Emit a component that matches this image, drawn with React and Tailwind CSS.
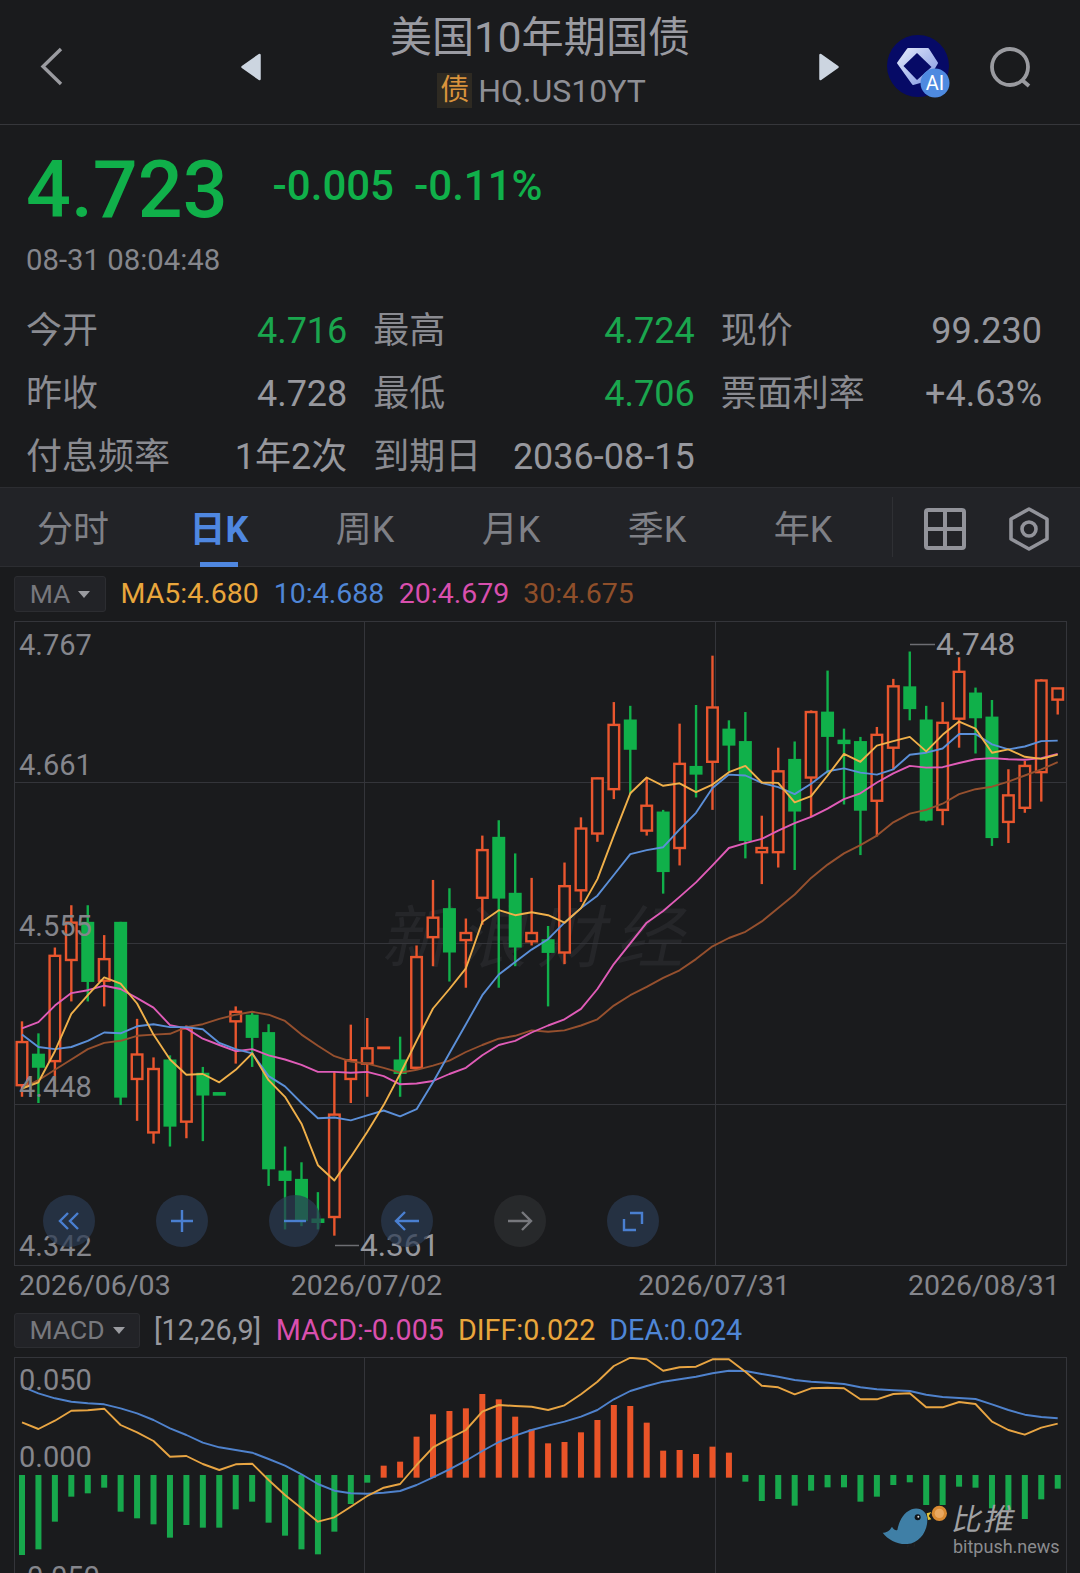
import React from 'react'

// measured off the reference: [up?, high, bodyTop, bodyBottom, low]
const candles = [
  [1, 968, 1018, 1122, 1150], [0, 997, 1046, 1080, 1165], [1, 790, 810, 1064, 1130], [1, 688, 730, 820, 920],
  [0, 688, 728, 873, 920], [1, 760, 818, 870, 932], [0, 728, 728, 1152, 1170], [1, 962, 1048, 1107, 1208],
  [1, 1055, 1083, 1236, 1263], [0, 1050, 1060, 1222, 1270], [1, 978, 985, 1210, 1250], [0, 1078, 1092, 1147, 1257],
  [0, 1143, 1141, 1145, 1143], [1, 932, 945, 968, 1070], [0, 948, 952, 1008, 1078], [0, 975, 994, 1325, 1365],
  [0, 1270, 1328, 1353, 1470], [0, 1308, 1348, 1450, 1462], [0, 1380, 1446, 1452, 1470], [1, 1090, 1193, 1440, 1485],
  [1, 976, 1062, 1107, 1165], [1, 960, 1033, 1070, 1150], [1, 1032, 1031, 1033, 1032], [0, 1005, 1060, 1095, 1150],
  [1, 785, 813, 1080, 1085], [1, 627, 718, 765, 835], [0, 647, 695, 802, 872], [1, 720, 755, 772, 887],
  [1, 520, 555, 670, 735], [0, 483, 523, 672, 887], [0, 563, 658, 790, 835], [1, 622, 755, 775, 785],
  [0, 738, 770, 803, 932], [1, 585, 642, 802, 830], [1, 476, 503, 652, 680], [1, 380, 382, 515, 535],
  [1, 198, 253, 408, 432], [0, 207, 240, 313, 420], [1, 380, 448, 508, 520], [0, 458, 462, 608, 660],
  [1, 250, 347, 550, 592], [0, 205, 352, 373, 428], [1, 86, 211, 342, 458], [0, 242, 262, 303, 365],
  [0, 222, 292, 533, 575], [1, 472, 550, 560, 637], [1, 308, 365, 560, 597], [0, 293, 335, 462, 603],
  [1, 218, 222, 380, 475], [0, 122, 221, 282, 370], [0, 262, 291, 297, 445], [0, 282, 292, 460, 567],
  [1, 258, 277, 436, 522], [1, 142, 160, 308, 362], [0, 76, 160, 215, 242], [0, 207, 240, 484, 486],
  [1, 198, 248, 458, 495], [1, 90, 125, 238, 308], [0, 163, 175, 237, 322], [0, 193, 233, 526, 545],
  [1, 360, 423, 487, 538], [1, 340, 352, 453, 465], [1, 143, 146, 367, 438], [1, 165, 165, 192, 228],
]

const ma5 = [1130, 1115, 1040, 950, 905, 862, 877, 925, 1000, 1060, 1097, 1095, 1115, 1085, 1045, 1110, 1150, 1215, 1315, 1352, 1295, 1235, 1170, 1095, 1015, 937, 890, 840, 728, 700, 712, 705, 712, 730, 695, 625, 520, 418, 380, 400, 394, 415, 397, 367, 352, 392, 393, 440, 425, 375, 323, 342, 303, 292, 282, 317, 277, 245, 262, 320, 312, 330, 335, 325]
const ma10 = [1000, 1030, 1035, 1030, 1015, 995, 997, 980, 975, 982, 982, 987, 1020, 1035, 1045, 1100, 1125, 1165, 1202, 1200, 1207, 1195, 1183, 1197, 1180, 1115, 1045, 975, 905, 855, 825, 795, 770, 730, 695, 665, 615, 565, 555, 548, 505, 465, 405, 373, 375, 393, 403, 420, 395, 365, 358, 368, 373, 360, 325, 320, 310, 275, 275, 300, 312, 305, 292, 291]
const ma20 = [985, 970, 930, 900, 893, 882, 890, 912, 935, 977, 985, 1010, 1025, 1040, 1035, 1050, 1060, 1073, 1090, 1090, 1092, 1090, 1100, 1120, 1118, 1112, 1095, 1080, 1050, 1025, 1015, 995, 978, 963, 938, 890, 830, 780, 730, 702, 668, 633, 592, 550, 538, 528, 508, 490, 475, 455, 432, 418, 392, 370, 352, 356, 355, 345, 336, 333, 336, 337, 333, 323]
const ma30 = [1130, 1110, 1085, 1060, 1035, 1020, 1015, 1003, 1000, 998, 982, 975, 962, 952, 945, 952, 967, 1000, 1027, 1052, 1065, 1070, 1080, 1092, 1085, 1075, 1063, 1042, 1025, 1010, 1003, 990, 993, 990, 978, 963, 930, 905, 885, 863, 845, 818, 787, 767, 752, 727, 695, 662, 622, 590, 563, 543, 520, 488, 467, 458, 443, 420, 408, 402, 390, 375, 360, 343]

const hist = [885, 868, 785, 710, 700, 683, 755, 775, 793, 833, 795, 803, 803, 748, 725, 788, 827, 868, 883, 815, 732, 668, 617, 605, 530, 463, 453, 445, 402, 418, 470, 508, 550, 546, 517, 480, 435, 438, 488, 572, 570, 582, 560, 578, 665, 723, 717, 737, 692, 682, 682, 725, 710, 675, 667, 735, 735, 680, 683, 745, 750, 777, 718, 686]
const diff = [487, 507, 482, 452, 451, 446, 495, 517, 543, 590, 588, 612, 630, 613, 611, 660, 705, 745, 785, 772, 740, 708, 683, 672, 615, 562, 535, 510, 455, 435, 438, 440, 450, 436, 403, 365, 318, 293, 298, 332, 322, 320, 298, 298, 335, 377, 382, 403, 385, 383, 385, 418, 418, 402, 400, 442, 442, 426, 432, 485, 510, 524, 503, 491]
const dea = [380, 400, 415, 425, 430, 433, 445, 460, 480, 505, 525, 548, 562, 570, 578, 597, 617, 643, 672, 692, 700, 701, 698, 693, 675, 652, 628, 602, 573, 546, 527, 510, 497, 485, 470, 450, 418, 393, 378, 365, 358, 350, 340, 332, 333, 342, 350, 360, 365, 368, 372, 382, 388, 391, 393, 404, 411, 414, 417, 433, 450, 464, 471, 475]

const RED = '#e9562e'
const GREEN = '#10b04a'
const X = (i) => 22 + 16.44 * i
const mainY = (v) => 620 + v / 2.412
const macdY = (v) => 1260 + v / 3

const points = (vals, toY) => vals.map((v, i) => `${X(i).toFixed(1)},${toY(v).toFixed(1)}`).join(' ')

const stats = [
  ['今开', '4.716', 'text-[#1aa64e]'], ['最高', '4.724', 'text-[#1aa64e]'], ['现价', '99.230', 'text-[#97989e]'],
  ['昨收', '4.728', 'text-[#97989e]'], ['最低', '4.706', 'text-[#1aa64e]'], ['票面利率', '+4.63%', 'text-[#97989e]'],
  ['付息频率', '1年2次', 'text-[#97989e]'], ['到期日', '2036-08-15', 'text-[#97989e]'],
]

const tabs = ['分时', '日K', '周K', '月K', '季K', '年K']

function Candle({ c, i }) {
  const [up, high, top, bottom, low] = c
  const x = X(i)
  const color = up ? RED : GREEN
  const doji = bottom - top < 8
  return (
    <g>
      {low > high && <line x1={x} x2={x} y1={mainY(high)} y2={mainY(low)} stroke={color} strokeWidth="2.4" />}
      {doji ? (
        <rect x={x - 6.5} y={mainY(top) - 1} width="13" height={Math.max(2.5, (bottom - top) / 2.412 + 2)} fill={color} />
      ) : up ? (
        <rect x={x - 5.3} y={mainY(top)} width="10.6" height={(bottom - top) / 2.412} fill="#1a1b1d" stroke={color} strokeWidth="2.4" />
      ) : (
        <rect x={x - 6.5} y={mainY(top)} width="13" height={(bottom - top) / 2.412} fill={color} />
      )}
    </g>
  )
}

function MainChart() {
  return (
    <svg className="block" width="1053" height="645" viewBox="14 621 1053 645">
      <g fill="none" stroke="#34353a" strokeWidth="1">
        <rect x="14.5" y="621.5" width="1052" height="644" />
        <line x1="14" x2="1067" y1="782.5" y2="782.5" />
        <line x1="14" x2="1067" y1="943.5" y2="943.5" />
        <line x1="14" x2="1067" y1="1104.5" y2="1104.5" />
        <line x1="364.5" x2="364.5" y1="621" y2="1265" />
        <line x1="715.5" x2="715.5" y1="621" y2="1265" />
      </g>
      {candles.map((c, i) => <Candle key={i} c={c} i={i} />)}
      <g fill="none" strokeWidth="1.9" strokeLinejoin="round">
        <polyline points={points(ma30, mainY)} stroke="#96502e" />
        <polyline points={points(ma20, mainY)} stroke="#e05cb8" />
        <polyline points={points(ma10, mainY)} stroke="#5b8fd8" />
        <polyline points={points(ma5, mainY)} stroke="#f0b04a" />
      </g>
      <line x1="335" x2="359" y1="1245.5" y2="1245.5" stroke="#6d6e73" strokeWidth="1.5" />
      <line x1="910" x2="935" y1="644.5" y2="644.5" stroke="#6d6e73" strokeWidth="1.5" />
    </svg>
  )
}

function MacdChart() {
  return (
    <svg className="block" width="1053" height="216" viewBox="14 1357 1053 216">
      <g fill="none" stroke="#34353a" strokeWidth="1">
        <line x1="14" x2="1067" y1="1357.5" y2="1357.5" />
        <line x1="14.5" x2="14.5" y1="1357" y2="1573" />
        <line x1="1066.5" x2="1066.5" y1="1357" y2="1573" />
        <line x1="364.5" x2="364.5" y1="1357" y2="1573" />
        <line x1="715.5" x2="715.5" y1="1357" y2="1573" />
      </g>
      {hist.map((v, i) => {
        const up = v < 645
        const top = up ? macdY(v) : macdY(645)
        const bottom = up ? macdY(653) : macdY(v)
        return <rect key={i} x={X(i) - 3} y={top} width="6" height={bottom - top} fill={up ? '#ea5428' : '#17a84c'} />
      })}
      <g fill="none" strokeWidth="1.9" strokeLinejoin="round">
        <polyline points={points(dea, macdY)} stroke="#4f82cc" />
        <polyline points={points(diff, macdY)} stroke="#e8a543" />
      </g>
    </svg>
  )
}

function RoundButton({ gray, children }) {
  return (
    <div className={`w-[52px] h-[52px] rounded-full flex items-center justify-center ${gray ? 'bg-[#2a2b2e]/85' : 'bg-[#2b3a52]/70'}`}>
      <svg width="30" height="30" viewBox="0 0 30 30" fill="none" stroke={gray ? '#77787d' : '#4a7fd0'} strokeWidth="2.4">
        {children}
      </svg>
    </div>
  )
}

function Tag({ className, children }) {
  return <span className={`absolute text-[29px] leading-none text-[#85868c] ${className}`}>{children}</span>
}

export default function App() {
  return (
    <div className="w-[1080px] h-[1573px] overflow-hidden bg-[#1a1b1d] font-[Roboto,'Noto_Sans_CJK_SC',sans-serif] text-[#97989e]">
      {/* top bar */}
      <div className="relative h-[125px] border-b border-[#36373b] flex items-start justify-between pl-[40px] pr-[48px]">
        <svg className="mt-[47px]" width="23" height="39" viewBox="0 0 23 39" fill="none" stroke="#9a9ba0" strokeWidth="3.4">
          <path d="M21 2 L3 19.5 L21 37" />
        </svg>
        <div className="flex-1 flex items-start justify-between ml-[178px] mr-[46px] mt-[53px]">
          <svg width="20" height="28" viewBox="0 0 20 28"><path d="M18.5 2 V26 L1.5 14 Z" fill="#ccd5e0" stroke="#ccd5e0" strokeWidth="2.5" strokeLinejoin="round" /></svg>
          <div className="-mt-[53px] flex flex-col items-center">
            <div className="text-[42.2px] leading-[44px] mt-[16px] text-[#9a9ba2]">美国10年期国债</div>
            <div className="flex items-center mt-[13px] h-[35px] ml-[3px]">
              <span className="w-[35px] h-[35px] bg-[#2e2a22] text-[#d9933c] text-[29px] leading-[35px] text-center">债</span>
              <span className="ml-[6px] text-[32px] leading-none text-[#8e8f95]">HQ.US10YT</span>
            </div>
          </div>
          <svg width="20" height="28" viewBox="0 0 20 28"><path d="M1.5 2 V26 L18.5 14 Z" fill="#ccd5e0" stroke="#ccd5e0" strokeWidth="2.5" strokeLinejoin="round" /></svg>
        </div>
        <svg className="mt-[34px]" width="66" height="66" viewBox="0 0 66 66">
          <defs>
            <linearGradient id="ai" x1="0" y1="0" x2="1" y2="1">
              <stop offset="0" stopColor="#e3e9fb" />
              <stop offset="1" stopColor="#7f95e0" />
            </linearGradient>
          </defs>
          <circle cx="33" cy="32" r="31" fill="#060a66" />
          <path d="M13 29 L23 15 H43 L52 29 L42 46 L28 50 Z" fill="url(#ai)" stroke="url(#ai)" strokeWidth="2" strokeLinejoin="round" />
          <path d="M32 19 L46.5 33 L32 46 L18.5 32 Z" fill="#060a66" />
          <circle cx="50" cy="49" r="14.5" fill="#4e8ae0" />
          <text x="50" y="56" textAnchor="middle" fontSize="20" fill="#fff" fontFamily="Roboto">AI</text>
        </svg>
        <svg className="mt-[47px] ml-[38px]" width="43" height="42" viewBox="0 0 43 42" fill="none" stroke="#9a9ba0" strokeWidth="3.8">
          <circle cx="21" cy="20" r="18" />
          <path d="M33 33 L40 39" />
        </svg>
      </div>

      {/* quote */}
      <div className="pl-[26px] pt-[13px] h-[117px]">
        <div className="flex items-center h-[104px] text-[#10b04a]">
          <span className="text-[79px] leading-none font-medium">4.723</span>
          <span className="ml-[45px] -mt-[8px] text-[42px] leading-none font-medium">-0.005</span>
          <span className="ml-[20px] -mt-[8px] text-[42px] leading-none font-medium">-0.11%</span>
        </div>
      </div>
      <div className="pl-[26px] pt-[2px] h-[36px] flex items-center text-[29.3px] text-[#85868c]">08-31 08:04:48</div>
      <div className="grid grid-cols-3 gap-x-[26px] pl-[26px] pr-[38px] pt-[21px] h-[209px]">
        {stats.map(([label, value, color]) => (
          <div key={label} className="flex items-center justify-between h-[63px] text-[36px] leading-none">
            <span className="text-[#8a8b91]">{label}</span>
            <span className={color}>{value}</span>
          </div>
        ))}
      </div>

      {/* period tabs */}
      <div className="h-[80px] bg-[#222327] border-y border-[#2c2d31] flex items-center">
        <div className="w-[876px] grid grid-cols-6">
          {tabs.map((t) => (
            <div key={t} className={`relative h-[78px] pt-[6px] flex items-center justify-center text-[36px] ${t === '日K' ? 'font-bold text-[#4f87e0]' : 'text-[#7f8086]'}`}>
              {t}
              {t === '日K' && <span className="absolute -bottom-[1px] left-1/2 -translate-x-1/2 w-[38px] h-[5px] bg-[#4f87e0]" />}
            </div>
          ))}
        </div>
        <div className="ml-[16px] h-[60px] border-l border-[#2f3034]" />
        <svg className="ml-[31px] mt-[3px]" width="42" height="42" viewBox="0 0 42 42" fill="none" stroke="#92939a" strokeWidth="4">
          <rect x="2" y="2" width="38" height="38" rx="2" />
          <path d="M21 2 V40 M2 21 H40" />
        </svg>
        <svg className="ml-[43px] mt-[3px]" width="40" height="44" viewBox="0 0 40 44" fill="none" stroke="#92939a" strokeWidth="3.6">
          <path d="M20 2 L38 12 V32 L20 42 L2 32 V12 Z" strokeLinejoin="round" />
          <circle cx="20" cy="22" r="7" />
        </svg>
      </div>

      {/* MA legend */}
      <div className="h-[54px] pl-[14px] flex items-center text-[28.5px] leading-none">
        <div className="w-[92px] h-[36px] bg-[#222327] border border-[#2c2d31] rounded-[3px] flex items-center justify-center gap-[8px] text-[26.5px] text-[#77787d]">
          MA
          <span className="w-0 h-0 border-x-[6px] border-x-transparent border-t-[7px] border-t-[#9a9ba0]" />
        </div>
        <span className="ml-[14.5px] text-[#e9a63c]">MA5:4.680</span>
        <span className="ml-[15px] text-[#4f86d6]">10:4.688</span>
        <span className="ml-[14.5px] text-[#d94fae]">20:4.679</span>
        <span className="ml-[14px] text-[#8f4f2a]">30:4.675</span>
      </div>

      {/* candlestick chart */}
      <div className="relative ml-[14px] w-[1053px] h-[645px]">
        <div className="absolute left-[372px] top-[284px] -skew-x-12 text-[68px] leading-none tracking-[10px] text-[#252629]">新浪财经</div>
        <div className="relative">
          <MainChart />
        </div>
        <Tag className="left-[5px] top-[10px]">4.767</Tag>
        <Tag className="left-[5px] top-[130px]">4.661</Tag>
        <Tag className="left-[5px] top-[291px]">4.555</Tag>
        <Tag className="left-[5px] top-[452px]">4.448</Tag>
        <Tag className="left-[5px] top-[611px]">4.342</Tag>
        <span className="absolute left-[346px] top-[609px] text-[31.6px] leading-none text-[#97989e]">4.361</span>
        <span className="absolute left-[922px] top-[8px] text-[31.6px] leading-none text-[#97989e]">4.748</span>
        <div className="absolute left-[29px] top-[574px] flex gap-[60.8px]">
          <RoundButton><path d="M14 7 L6 15 L14 23 M24 7 L16 15 L24 23" /></RoundButton>
          <RoundButton><path d="M15 4 V26 M4 15 H26" /></RoundButton>
          <RoundButton><path d="M4 15 H26" /></RoundButton>
          <RoundButton><path d="M13 6 L4 15 L13 24 M4 15 H27" /></RoundButton>
          <RoundButton gray><path d="M17 6 L26 15 L17 24 M26 15 H3" /></RoundButton>
          <RoundButton><path d="M12 7 H24 V18 M18 24 H6 V13" /></RoundButton>
        </div>
      </div>

      {/* date axis */}
      <div className="h-[41px] pl-[19px] flex items-center text-[28.5px] leading-none text-[#85868c]">
        <span>2026/06/03</span>
        <span className="ml-[120px]">2026/07/02</span>
        <span className="ml-[196px]">2026/07/31</span>
        <span className="ml-[118px]">2026/08/31</span>
      </div>

      {/* MACD legend */}
      <div className="h-[50px] pb-[3px] pl-[14px] flex items-center text-[28.7px] leading-none">
        <div className="w-[126px] h-[35px] bg-[#222327] border border-[#2c2d31] rounded-[3px] flex items-center justify-center gap-[8px] text-[26.5px] text-[#77787d]">
          MACD
          <span className="w-0 h-0 border-x-[6px] border-x-transparent border-t-[7px] border-t-[#9a9ba0]" />
        </div>
        <span className="ml-[14px] text-[#97989e]">[12,26,9]</span>
        <span className="ml-[14.5px] text-[#d94fae]">MACD:-0.005</span>
        <span className="ml-[14px] text-[#e9a63c]">DIFF:0.022</span>
        <span className="ml-[14px] text-[#4f86d6]">DEA:0.024</span>
      </div>

      {/* MACD chart */}
      <div className="relative ml-[14px] w-[1053px] h-[216px]">
        <MacdChart />
        <Tag className="left-[5px] top-[9px]">0.050</Tag>
        <Tag className="left-[5px] top-[86px]">0.000</Tag>
        <Tag className="left-[5px] top-[206px]">-0.050</Tag>
        {/* bitpush watermark */}
        <div className="absolute left-[856px] top-[133px] flex items-start">
          <svg width="80" height="60" viewBox="0 0 240 180">
            <path d="M38 128 C48 128 58 124 66 110 C70 118 76 122 82 120 C86 100 96 70 125 58 C150 50 172 65 172 90 C172 125 148 160 112 162 C82 164 55 150 38 128 Z" fill="#3f7fa6" />
            <path d="M170 70 L184 66 L176 78 L184 88 L174 90 Z" fill="#e6c63a" />
            <circle cx="143" cy="82" r="9" fill="#10151a" />
            <circle cx="145" cy="80" r="3" fill="#d8dde0" />
            <circle cx="208" cy="70" r="23" fill="#d98a32" />
            <circle cx="208" cy="70" r="14" fill="#eaa860" />
            <path d="M115 164 L112 172 M134 160 L132 170" stroke="#222" strokeWidth="4" />
          </svg>
          <div className="ml-[3px] mt-[14px] flex flex-col">
            <span className="text-[30px] leading-[31px] -skew-x-12 tracking-[2px] text-[#a0a1a3]">比推</span>
            <span className="text-[18px] leading-[20px] mt-[2px] text-[#8b8c8f]">bitpush.news</span>
          </div>
        </div>
      </div>
    </div>
  )
}
